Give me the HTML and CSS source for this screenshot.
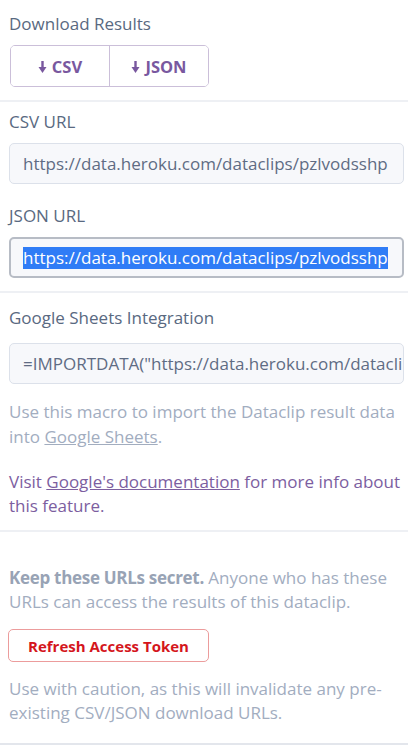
FILE: index.html
```html
<!DOCTYPE html>
<html>
<head>
<meta charset="utf-8">
<link rel="stylesheet" href="styles.css">
</head>
<body>
<div class="panel">
  <section class="sec sec-download">
    <div class="label">Download Results</div>
    <div class="btn-group">
      <button class="btn"><svg class="arrow" width="9" height="12" viewBox="0 0 9 12"><rect x="3.3" y="0" width="2.4" height="7" fill="currentColor"/><path d="M0.5 6 L8.5 6 L4.5 12 Z" fill="currentColor"/></svg>CSV</button>
      <button class="btn"><svg class="arrow" width="9" height="12" viewBox="0 0 9 12"><rect x="3.3" y="0" width="2.4" height="7" fill="currentColor"/><path d="M0.5 6 L8.5 6 L4.5 12 Z" fill="currentColor"/></svg>JSON</button>
    </div>
  </section>
  <section class="sec sec-urls">
    <div class="label">CSV URL</div>
    <div class="field">https://data.heroku.com/dataclips/pzlvodsshp</div>
    <div class="label label-gap">JSON URL</div>
    <div class="field field-focus"><span class="sel">https://data.heroku.com/dataclips/pzlvodsshp</span></div>
  </section>
  <section class="sec sec-sheets">
    <div class="label label-sheets">Google Sheets Integration</div>
    <div class="field">=IMPORTDATA("https://data.heroku.com/dataclips/pzlvodsshp.csv")</div>
    <p class="help help-first">Use this macro to import the Dataclip result data into <a class="link-gray">Google Sheets</a>.</p>
    <p class="help purple">Visit <a class="link-purple">Google's documentation</a> for more info about this feature.</p>
  </section>
  <section class="sec sec-secret">
    <p class="help help-keep"><strong>Keep these URLs secret.</strong> Anyone who has these URLs can access the results of this dataclip.</p>
    <button class="btn-danger">Refresh Access Token</button>
    <p class="help help-caution">Use with caution, as this will invalidate any pre-existing CSV/JSON download URLs.</p>
  </section>
</div>
</body>
</html>
```
FILE: styles.css
```css
* { box-sizing: border-box; }
html, body { margin: 0; padding: 0; background: #fff; }
body {
  font-family: "Open Sans", Lato, sans-serif;
  font-size: 17px;
  color: #596981;
  width: 408px;
  height: 747px;
  overflow: hidden;
}
.panel {
  height: 745px;
  border-bottom: 2px solid #e3e6ec;
}
.sec {
  padding: 0 4px 0 9px;
  border-bottom: 2px solid #eef0f4;
}
.sec-download { padding-top: 14px; padding-bottom: 13px; }
.sec-urls { padding-top: 10px; padding-bottom: 13px; }
.sec-sheets { padding-top: 15px; padding-bottom: 12px; }
.sec-secret { border-bottom: none; padding-top: 34px; }
.label {
  font-size: 17px;
  line-height: 20px;
  color: #596981;
  margin-bottom: 11px;
}
.label-gap { margin-top: 22px; margin-bottom: 11px; }
.label-sheets { margin-bottom: 15px; }
.btn-group {
  display: flex;
  width: 199px;
  height: 42px;
  margin-left: 1px;
  border: 1px solid #cbbfd9;
  border-radius: 5px;
  overflow: hidden;
}
.btn {
  flex: 1;
  background: #fff;
  border: none;
  font-family: "Open Sans", sans-serif;
  font-weight: 700;
  font-size: 16.5px;
  color: #79589f;
  display: flex;
  align-items: center;
  justify-content: center;
  gap: 5px;
  padding: 0;
}
.btn + .btn { border-left: 1px solid #cbbfd9; }
.arrow { display: block; margin-top: 1px; }
.field {
  height: 41px;
  background: #f7f8fb;
  border: 1px solid #dce1ea;
  border-radius: 5px;
  padding: 0 13px;
  display: flex;
  align-items: center;
  white-space: nowrap;
  overflow: hidden;
  font-size: 17px;
  color: #5f6c84;
}
.field-focus {
  border: 2px solid #b7bcc5;
  padding: 0 12px;
}
.sel {
  background: #2f7cf6;
  color: #fff;
  line-height: 22px;
}
.help {
  margin: 0;
  font-size: 17px;
  line-height: 24px;
  color: #a2adbf;
}
.help-first { margin-top: 15px; line-height: 25px; }
.help.purple { color: #7c5e9f; margin-top: 21px; }
.help strong { font-weight: 700; color: #98a3b5; letter-spacing: -0.3px; }
.link-gray { color: #a2adbf; text-decoration: underline; }
.link-purple { color: #7c5e9f; text-decoration: underline; }
.btn-danger {
  display: block;
  margin: 15px 0 0 -1px;
  width: 201px;
  height: 33px;
  border: 1px solid #ec9c9c;
  border-radius: 5px;
  background: #fff;
  color: #d4161c;
  font-family: "Open Sans", sans-serif;
  font-weight: 700;
  font-size: 15px;
  padding: 0;
}
.help-caution { margin-top: 15px; }
```
